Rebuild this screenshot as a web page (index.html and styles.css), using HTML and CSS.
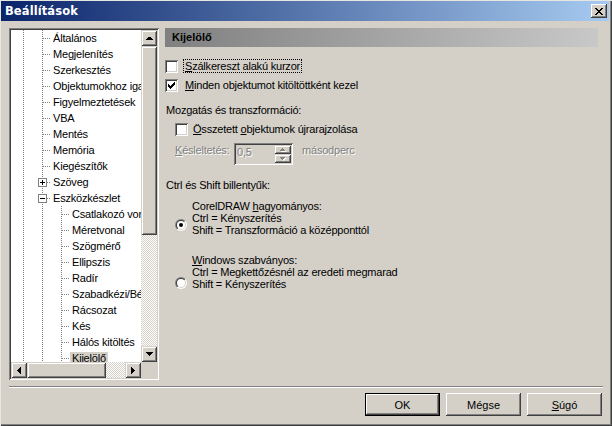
FILE: index.html
```html
<!DOCTYPE html>
<html lang="hu">
<head>
<meta charset="utf-8">
<title>Beállítások</title>
<link rel="stylesheet" href="styles.css">
</head>
<body>
<div class="window">
  <div class="titlebar">
    <span class="title">Beállítások</span>
    <span class="close"><svg width="8" height="7" viewBox="0 0 8 7" shape-rendering="crispEdges"><path d="M0 0h2v1H0zM6 0h2v1H6zM1 1h2v1H1zM5 1h2v1H5zM2 2h4v1H2zM3 3h2v1H3zM2 4h4v1H2zM1 5h2v1H1zM5 5h2v1H5zM0 6h2v1H0zM6 6h2v1H6z" fill="#000"/></svg></span>
  </div>

  <div class="content">
    <div class="tree">
      <div class="tree-main">
        <div class="tree-list">
          <div class="row"><i class="ind"></i><i class="br"></i><span class="lbl">Általános</span></div>
          <div class="row"><i class="ind"></i><i class="br"></i><span class="lbl">Megjelenítés</span></div>
          <div class="row"><i class="ind"></i><i class="br"></i><span class="lbl">Szerkesztés</span></div>
          <div class="row"><i class="ind"></i><i class="br"></i><span class="lbl">Objektumokhoz igazítás</span></div>
          <div class="row"><i class="ind"></i><i class="br"></i><span class="lbl">Figyelmeztetések</span></div>
          <div class="row"><i class="ind"></i><i class="br"></i><span class="lbl">VBA</span></div>
          <div class="row"><i class="ind"></i><i class="br"></i><span class="lbl">Mentés</span></div>
          <div class="row"><i class="ind"></i><i class="br"></i><span class="lbl">Memória</span></div>
          <div class="row"><i class="ind"></i><i class="br"></i><span class="lbl">Kiegészítők</span></div>
          <div class="row"><i class="ind"></i><i class="br"><b class="exp plus"></b></i><span class="lbl">Szöveg</span></div>
          <div class="row"><i class="ind"></i><i class="br"><b class="exp"></b></i><span class="lbl">Eszközkészlet</span></div>
          <div class="row"><i class="ind"></i><i class="ind"></i><i class="br"></i><span class="lbl">Csatlakozó vonal</span></div>
          <div class="row"><i class="ind"></i><i class="ind"></i><i class="br"></i><span class="lbl">Méretvonal</span></div>
          <div class="row"><i class="ind"></i><i class="ind"></i><i class="br"></i><span class="lbl">Szögmérő</span></div>
          <div class="row"><i class="ind"></i><i class="ind"></i><i class="br"></i><span class="lbl">Ellipszis</span></div>
          <div class="row"><i class="ind"></i><i class="ind"></i><i class="br"></i><span class="lbl">Radír</span></div>
          <div class="row"><i class="ind"></i><i class="ind"></i><i class="br"></i><span class="lbl">Szabadkézi/Bézier</span></div>
          <div class="row"><i class="ind"></i><i class="ind"></i><i class="br"></i><span class="lbl">Rácsozat</span></div>
          <div class="row"><i class="ind"></i><i class="ind"></i><i class="br"></i><span class="lbl">Kés</span></div>
          <div class="row"><i class="ind"></i><i class="ind"></i><i class="br"></i><span class="lbl">Hálós kitöltés</span></div>
          <div class="row"><i class="ind"></i><i class="ind"></i><i class="br"></i><span class="lbl sel">Kijelölő</span></div>
        </div>
        <div class="vscroll">
          <div class="sbtn"><svg width="7" height="4" viewBox="0 0 7 4" shape-rendering="crispEdges"><path d="M3 0h1v1h1v1h1v1h1v1H0V3h1V2h1V1h2z" fill="#000"/></svg></div>
          <div class="sthumb vthumb"></div>
          <div class="strack"></div>
          <div class="sbtn"><svg width="7" height="4" viewBox="0 0 7 4" shape-rendering="crispEdges"><path d="M0 0h7v1H6v1H5v1H4v1H3V3H2V2H1V1H0z" fill="#000"/></svg></div>
        </div>
      </div>
      <div class="hscroll">
        <div class="sbtn"><svg width="4" height="7" viewBox="0 0 4 7" shape-rendering="crispEdges"><path d="M3 0h1v7H3V6H2V5H1V4H0V3h1V2h1V1h1z" fill="#000"/></svg></div>
        <div class="sthumb hthumb"></div>
        <div class="strack"></div>
        <div class="sbtn"><svg width="4" height="7" viewBox="0 0 4 7" shape-rendering="crispEdges"><path d="M0 0h1v1h1v1h1v1h1v1H3v1H2v1H1v1H0z" fill="#000"/></svg></div>
        <div class="corner"></div>
      </div>
    </div>

    <div class="panel">
      <div class="header">Kijelölő</div>

      <div class="check-row first">
        <span class="cbox"></span>
        <span class="clabel focus"><u>S</u>zálkereszt alakú kurzor</span>
      </div>
      <div class="check-row second">
        <span class="cbox"><svg width="7" height="7" viewBox="0 0 7 7" shape-rendering="crispEdges"><path d="M0 2h1v3H0zM1 3h1v3H1zM2 4h1v3H2zM3 3h1v3H3zM4 2h1v3H4zM5 1h1v3H5zM6 0h1v3H6z" fill="#000"/></svg></span>
        <span class="clabel"><u>M</u>inden objektumot kitöltöttként kezel</span>
      </div>

      <div class="group-title move">Mozgatás és transzformáció:</div>
      <div class="check-row third">
        <span class="cbox"></span>
        <span class="clabel"><u>Ö</u>sszetett <u>o</u>bjektumok újrarajzolása</span>
      </div>

      <div class="spin-row">
        <span class="disabled delay-lbl"><u>K</u>ésleltetés:</span>
        <div class="spin">
          <span class="spin-val disabled">0,5</span>
          <span class="spin-btns">
            <span class="spbtn"><svg width="6" height="4" viewBox="0 0 6 4" shape-rendering="crispEdges"><path d="M3 1h1v1h1v1H6v1H1V3h1V2h1z" fill="#fff"/><path d="M2 0h1v1h1v1h1v1H0V2h1V1h1z" fill="#808080"/></svg></span>
            <span class="spbtn"><svg width="6" height="4" viewBox="0 0 6 4" shape-rendering="crispEdges"><path d="M1 1h5v1H5v1H4v1H3V3H2V2H1z" fill="#fff"/><path d="M0 0h5v1H4v1H3v1H2V2H1V1H0z" fill="#808080"/></svg></span>
          </span>
        </div>
        <span class="disabled unit">másodperc</span>
      </div>

      <div class="group-title keys">Ctrl és Shift billentyűk:</div>

      <div class="radio-row r1">
        <span class="radio"><svg width="12" height="12" viewBox="0 0 12 12"><defs><linearGradient id="ro" x1="0" y1="0" x2="1" y2="1"><stop offset=".5" stop-color="#808080"/><stop offset=".5" stop-color="#ffffff"/></linearGradient><linearGradient id="ri" x1="0" y1="0" x2="1" y2="1"><stop offset=".5" stop-color="#404040"/><stop offset=".5" stop-color="#d4d0c8"/></linearGradient></defs><circle cx="6" cy="6" r="6" fill="url(#ro)"/><circle cx="6" cy="6" r="5" fill="url(#ri)"/><circle cx="6" cy="6" r="4" fill="#fff"/><circle cx="6" cy="6" r="2" fill="#000"/></svg></span>
        <span class="rtext">CorelDRAW <u>h</u>agyományos:<br>Ctrl = Kényszerítés<br>Shift = Transzformáció a középponttól</span>
      </div>

      <div class="radio-row r2">
        <span class="radio"><svg width="12" height="12" viewBox="0 0 12 12"><circle cx="6" cy="6" r="6" fill="url(#ro)"/><circle cx="6" cy="6" r="5" fill="url(#ri)"/><circle cx="6" cy="6" r="4" fill="#fff"/></svg></span>
        <span class="rtext"><u>W</u>indows szabványos:<br>Ctrl = Megkettőzésnél az eredeti megmarad<br>Shift = Kényszerítés</span>
      </div>
    </div>
  </div>

  <div class="separator"></div>

  <div class="buttons">
    <button class="btn default">OK</button>
    <button class="btn">Mégse</button>
    <button class="btn"><u>S</u>úgó</button>
  </div>
</div>
</body>
</html>
```

FILE: styles.css
```css
* { box-sizing: border-box; }
html, body { margin: 0; padding: 0; }
body {
  width: 612px;
  height: 426px;
  overflow: hidden;
  background: #d4d0c8;
  font-family: "Liberation Sans", Arial, sans-serif;
  font-size: 11px;
  letter-spacing: -0.2px;
  color: #000;
}
u { text-decoration: underline; text-underline-offset: 1px; }

.window {
  width: 612px;
  height: 426px;
  padding: 1px 3px 0 1px;
  background: #d4d0c8;
  box-shadow: inset 1px 1px #e8e6e0, inset -1px -1px #404040, inset -2px -2px #808080;
  display: flex;
  flex-direction: column;
}

/* title bar */
.titlebar {
  height: 20px;
  background: linear-gradient(90deg, #0a246a, #a6caf0);
  display: flex;
  align-items: center;
  justify-content: space-between;
  padding: 0 2px 0 4px;
}
.title {
  color: #fff;
  font-family: "DejaVu Sans", sans-serif;
  font-weight: bold;
  font-size: 11.5px;
  letter-spacing: 0.1px;
}
.close {
  width: 16px;
  height: 14px;
  background: #d4d0c8;
  box-shadow: inset -1px -1px #404040, inset 1px 1px #fff, inset -2px -2px #808080;
  display: flex;
  align-items: center;
  justify-content: center;
}

/* content */
.content {
  display: flex;
  margin-top: 7px;
  padding-left: 8px;
}

/* tree */
.tree {
  width: 150px;
  height: 352px;
  padding: 2px;
  background: #fff;
  box-shadow: inset 1px 1px #808080, inset -1px -1px #fff, inset 2px 2px #404040, inset -2px -2px #d4d0c8;
  display: flex;
  flex-direction: column;
}
.tree-main { display: flex; height: 332px; }
.tree-list {
  width: 130px;
  overflow: hidden;
  background: #fff;
}
.row {
  height: 16px;
  display: flex;
  align-items: center;
  white-space: nowrap;
}
.ind, .br {
  align-self: stretch;
  flex: none;
  display: flex;
  align-items: center;
}
.ind {
  width: 19px;
  background: repeating-linear-gradient(#808080 0 1px, transparent 1px 2px) 12px 0 / 1px 100% no-repeat;
}
.br {
  width: 21px;
  background:
    repeating-linear-gradient(#808080 0 1px, transparent 1px 2px) 12px 0 / 1px 100% no-repeat,
    repeating-linear-gradient(90deg, #808080 0 1px, transparent 1px 2px) 13px 8px / 8px 1px no-repeat;
}
.exp {
  width: 9px;
  height: 9px;
  margin-left: 8px;
  border: 1px solid #808080;
  background:
    linear-gradient(#000, #000) 1px 3px / 5px 1px no-repeat,
    #fff;
}
.exp.plus {
  background:
    linear-gradient(#000, #000) 1px 3px / 5px 1px no-repeat,
    linear-gradient(#000, #000) 3px 1px / 1px 5px no-repeat,
    #fff;
}
.lbl {
  padding: 0 2px;
  line-height: 13px;
}
.lbl.sel { background: #d4d0c8; }

/* scrollbars */
.vscroll { width: 16px; display: flex; flex-direction: column; }
.hscroll { height: 16px; display: flex; }
.sbtn, .sthumb {
  width: 16px;
  height: 16px;
  flex: none;
  background: #d4d0c8;
  box-shadow: inset 1px 1px #d4d0c8, inset -1px -1px #404040, inset 2px 2px #fff, inset -2px -2px #808080;
  display: flex;
  align-items: center;
  justify-content: center;
}
.vthumb { height: 189px; }
.hthumb { width: 79px; }
.strack {
  flex: 1;
  background: conic-gradient(#fff 25%, #d4d0c8 0 50%, #fff 0 75%, #d4d0c8 0);
  background-size: 2px 2px;
}
.corner { width: 16px; flex: none; background: #d4d0c8; }

/* right panel */
.panel {
  width: 433px;
  margin-left: 6px;
  display: flex;
  flex-direction: column;
}
.header {
  height: 19px;
  line-height: 19px;
  padding-left: 7px;
  font-weight: bold;
  letter-spacing: 0;
  background: linear-gradient(90deg, #808080, #c8c8c8);
}
.check-row {
  display: flex;
  align-items: center;
  height: 14px;
}
.check-row.first { margin-top: 12px; }
.check-row.second { margin-top: 5px; }
.check-row.third { margin-top: 5px; padding-left: 10px; }
.cbox {
  width: 13px;
  height: 13px;
  flex: none;
  background: #fff;
  box-shadow: inset 1px 1px #808080, inset -1px -1px #fff, inset 2px 2px #404040, inset -2px -2px #d4d0c8;
  display: flex;
  align-items: center;
  justify-content: center;
}
.clabel { margin-left: 5px; padding: 0 1px; line-height: 12px; border: 1px solid transparent; }
.third .clabel { margin-left: 3px; }
.clabel.focus { border: 1px dotted #000; }

.group-title { line-height: 13px; padding-left: 1px; }
.group-title.move { margin-top: 12px; }
.group-title.keys { margin-top: 14px; }

.disabled { color: #808080; text-shadow: 1px 1px 0 #fff; }

.spin-row {
  display: flex;
  align-items: flex-start;
  margin-top: 7px;
  padding-left: 10px;
  line-height: 13px;
}
.delay-lbl { width: 59px; margin-top: 1px; }
.spin {
  width: 59px;
  height: 22px;
  padding: 2px;
  display: flex;
  background: #d4d0c8;
  box-shadow: inset 1px 1px #808080, inset -1px -1px #fff, inset 2px 2px #404040, inset -2px -2px #d4d0c8;
}
.spin-val { flex: 1; padding: 1px 0 0 1px; }
.spin-btns { width: 17px; display: flex; flex-direction: column; }
.spbtn {
  height: 9px;
  background: #d4d0c8;
  box-shadow: inset 1px 1px #d4d0c8, inset -1px -1px #404040, inset 2px 2px #fff, inset -2px -2px #808080;
  display: flex;
  align-items: center;
  justify-content: center;
}
.unit { margin-left: 9px; margin-top: 1px; }

.radio-row {
  display: flex;
  align-items: flex-start;
  padding-left: 10px;
}
.radio-row.r1 { margin-top: 8px; }
.radio-row.r2 { margin-top: 18px; }
.radio { width: 12px; height: 12px; flex: none; display: flex; }
.r1 .radio { margin-top: 19px; }
.r2 .radio { margin-top: 23px; }
.rtext { margin-left: 5px; line-height: 12px; }

/* bottom */
.separator {
  margin: 6px 0 0 8px;
  width: 594px;
  height: 2px;
  border-top: 1px solid #808080;
  border-bottom: 1px solid #fff;
}
.buttons {
  display: flex;
  justify-content: flex-end;
  gap: 6px;
  margin-top: 5px;
  padding-right: 7px;
}
.btn {
  width: 75px;
  height: 23px;
  border: 0;
  padding: 0;
  font: inherit;
  color: #000;
  background: #d4d0c8;
  box-shadow: inset -1px -1px #404040, inset 1px 1px #fff, inset -2px -2px #808080;
}
.btn.default {
  box-shadow: inset 0 0 0 1px #000, inset -2px -2px #404040, inset 2px 2px #fff, inset -3px -3px #808080;
}
```
